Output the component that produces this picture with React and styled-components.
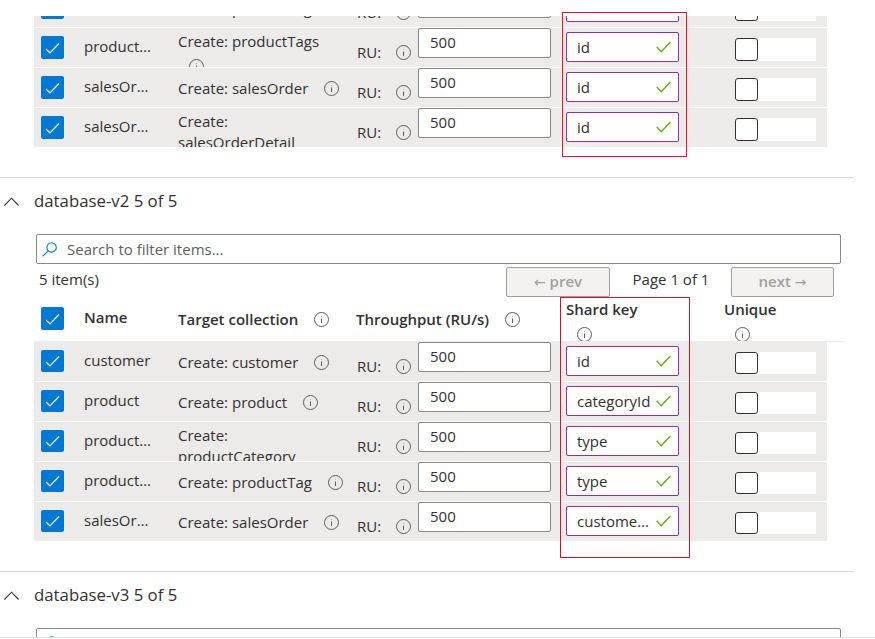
import React from "react";
import styled, { createGlobalStyle } from "styled-components";

const Global = createGlobalStyle`
  html, body { margin: 0; padding: 0; background: #fff; }
  body { font-family: "Open Sans", "Noto Sans", "Liberation Sans", sans-serif; font-size: 15px; color: #323130; }
`;

const Page = styled.div`
  position: relative;
  height: 638px;
  overflow: hidden;
  padding-top: 16px;
  box-sizing: border-box;
  border-bottom: 1px solid #e1dfdd;
`;
const Annotation = styled.div`
  position: absolute;
  left: ${(p) => p.$left}px;
  top: ${(p) => p.$top}px;
  width: ${(p) => p.$width}px;
  height: ${(p) => p.$height}px;
  box-sizing: border-box;
  border: 1px solid ${(p) => p.$color};
  pointer-events: none;
`;
const ScrolledRows = styled.div`
  height: 131px;
  overflow: hidden;
`;
const ScrollInner = styled.div`
  margin-top: -28px;
`;
const Section = styled.section`
  padding-bottom: 30px;
  border-bottom: 1px solid #d8d8d8;
  width: 854px;
`;
const Heading = styled.div`
  display: flex;
  align-items: center;
  height: 46px;
  margin-bottom: 10px;
  gap: 15px;
  padding-left: 4px;
  font-size: 16.8px;
`;
const HeadingText = styled.span`
  padding-bottom: 2px;
`;
const SearchBox = styled.div`
  display: flex;
  align-items: center;
  gap: 10px;
  box-sizing: border-box;
  margin-left: 36px;
  width: 805px;
  height: 30px;
  padding-left: 5px;
  border: 1px solid #8a8886;
  border-radius: 2px;
`;
const SearchInput = styled.input`
  flex: 1;
  border: 0;
  outline: 0;
  padding: 0;
  background: transparent;
  font: inherit;
  color: #323130;
  &::placeholder { color: #605e5c; opacity: 1; }
`;
const PagerRow = styled.div`
  display: flex;
  justify-content: space-between;
  width: 795px;
  margin: 3px 0 0 39px;
  height: 30px;
  line-height: 24px;
`;
const Pager = styled.div`
  display: flex;
  align-items: flex-start;
`;
const PageLabel = styled.span`
  box-sizing: border-box;
  width: 121px;
  padding-left: 1px;
  text-align: center;
`;
const PagerButton = styled.button`
  box-sizing: border-box;
  width: ${(p) => p.$width}px;
  height: 30px;
  padding: 0 0 2px;
  border: 1px solid #a19f9d;
  border-radius: 2px;
  background: #f3f2f1;
  color: #a19f9d;
  font: inherit;
  font-weight: 600;
`;
const Arrow = styled.span`
  font-family: "DejaVu Sans", sans-serif;
  font-weight: 400;
  font-size: 14px;
`;
const Table = styled.div`
  margin-left: 34px;
  width: 810px;
`;
const columns = "50px 94px 179px 209px 158px 103px";
const HeadRow = styled.div`
  display: grid;
  grid-template-columns: ${columns};
  height: 44px;
  overflow: hidden;
  border-bottom: 1px solid #edebe9;
  box-sizing: content-box;
  font-weight: 600;
`;
const HeadCell = styled.div`
  display: flex;
  flex-wrap: ${(p) => (p.$stack ? "wrap" : "nowrap")};
  align-content: flex-start;
  align-items: flex-start;
  margin-left: ${(p) => p.$shift || 0}px;
  padding-top: ${(p) => p.$top}px;
  line-height: 21px;
  white-space: nowrap;
`;
const HeadLabel = styled.span`
  flex: ${(p) => (p.$stack ? "0 0 100%" : "0 0 auto")};
  margin-right: ${(p) => (p.$stack ? 0 : 16)}px;
`;
const HeadInfo = styled.span`
  display: flex;
  margin-top: 3px;
`;
const StackedInfo = styled.span`
  display: flex;
  margin: 7px 0 0 11px;
`;
const Row = styled.div`
  display: grid;
  grid-template-columns: ${columns};
  width: 793px;
  height: 39px;
  margin-bottom: 1px;
  overflow: hidden;
  background: #edebe9;
  &:last-child { margin-bottom: 0; }
`;
const CheckCell = styled.div`
  padding: ${(p) => p.$top}px 0 0 7px;
`;
const CheckBox = styled.span`
  display: flex;
  align-items: center;
  justify-content: center;
  width: 23px;
  height: ${(p) => (p.$tall ? 23 : 22)}px;
  border-radius: 2px;
  background: #0078d4;
`;
const NameCell = styled.div`
  width: 70px;
  padding-top: 8px;
  line-height: 21px;
  white-space: nowrap;
  overflow: hidden;
  text-overflow: ellipsis;
`;
const TargetCell = styled.div`
  display: flex;
  flex-wrap: wrap;
  align-items: center;
  align-content: flex-start;
  width: 170px;
  padding-top: ${(p) => (p.$wrapped ? 3 : 10)}px;
  line-height: 21px;
`;
const TargetText = styled.span`
  padding-right: 5px;
`;
const TargetInfo = styled.span`
  display: flex;
  margin: ${(p) => (p.$wrapped ? "7px" : "0")} 0 0 11px;
`;
const ThroughputCell = styled.div`
  display: flex;
  align-items: flex-start;
`;
const RuLabel = styled.span`
  width: 39px;
  padding-top: 14px;
  line-height: 21px;
`;
const RuInfo = styled.span`
  display: flex;
  width: 22px;
  padding-top: 17px;
`;
const RuInput = styled.input`
  box-sizing: border-box;
  width: 133px;
  height: 30px;
  padding: 0 11px 2px;
  border: 1px solid #8a8886;
  border-radius: 2px;
  background: #fff;
  font: inherit;
  color: #323130;
  outline: 0;
`;
const ShardBox = styled.div`
  display: flex;
  align-items: center;
  justify-content: space-between;
  box-sizing: border-box;
  width: 113px;
  height: 30px;
  margin-top: 4px;
  padding: 0 7px 0 10px;
  border: 1px solid #8e2db0;
  border-radius: 2px;
  background: #fff;
`;
const ShardText = styled.span`
  width: 76px;
  overflow: hidden;
  white-space: nowrap;
  text-overflow: ellipsis;
`;
const UniqueCell = styled.div`
  padding: 10px 0 0 11px;
`;
const UniqueStrip = styled.div`
  width: 81px;
  height: ${(p) => (p.$tall ? 23 : 22)}px;
  background: #fff;
`;
const UniqueBox = styled.span`
  display: block;
  box-sizing: border-box;
  width: 23px;
  height: 100%;
  border: 1px solid #323130;
  border-radius: 3px;
  background: #fff;
`;

const Info = () => (
  <svg width="15" height="15" viewBox="0 0 15 15" fill="none" stroke="#605e5c">
    <circle cx="7.5" cy="7.5" r="7" />
    <path d="M7.5 6.5v4.5" />
    <circle cx="7.5" cy="4.4" r=".5" fill="#a19f9d" stroke="none" />
  </svg>
);
const Tick = () => (
  <svg width="23" height="22" viewBox="0 0 23 22" fill="none" stroke="#fff" strokeWidth="1.2">
    <path d="M5 12l4 4 9-9.5" />
  </svg>
);
const Valid = () => (
  <svg width="15" height="12" viewBox="0 0 15 12" fill="none" stroke="#5fae0c" strokeWidth="1.3" style={{ flex: "none" }}>
    <path d="M.7 6l4.6 4.8L14.4 1" />
  </svg>
);
const Chevron = () => (
  <svg width="15" height="9" viewBox="0 0 15 9" fill="none" stroke="#323130" strokeWidth="1.1">
    <path d="M.4 8.5L7.5 1.2l7.1 7.3" />
  </svg>
);
const Magnifier = () => (
  <svg width="15" height="15" viewBox="0 0 15 15" fill="none" stroke="#0078d4" strokeWidth="1.1">
    <circle cx="9.6" cy="5.4" r="4.7" />
    <path d="M6.2 8.8L.6 14.4" />
  </svg>
);

const sections = {
  top: [
    ["productTag", "productTag", "id"],
    ["productTags", "productTags", "id", "iconWrap"],
    ["salesOrder", "salesOrder", "id"],
    ["salesOrderDetail", "salesOrderDetail", "id", "wrap"],
  ],
  v2: [
    ["customer", "customer", "id"],
    ["product", "product", "categoryId"],
    ["productCategory", "productCategory", "type", "wrap"],
    ["productTag", "productTag", "type"],
    ["salesOrder", "salesOrder", "customerId"],
  ],
};

function DataRow({ name, target, shard, mode, tall }) {
  const wrapped = mode === "wrap" || mode === "iconWrap";
  return (
    <Row>
      <CheckCell $top={8}>
        <CheckBox $tall={tall}><Tick /></CheckBox>
      </CheckCell>
      <NameCell>{name}</NameCell>
      <TargetCell $wrapped={wrapped}>
        <TargetText>Create: {target}</TargetText>
        <TargetInfo $wrapped={mode === "iconWrap"}><Info /></TargetInfo>
      </TargetCell>
      <ThroughputCell>
        <RuLabel>RU:</RuLabel>
        <RuInfo><Info /></RuInfo>
        <RuInput defaultValue="500" />
      </ThroughputCell>
      <div>
        <ShardBox>
          <ShardText>{shard}</ShardText>
          <Valid />
        </ShardBox>
      </div>
      <UniqueCell>
        <UniqueStrip $tall={tall}><UniqueBox /></UniqueStrip>
      </UniqueCell>
    </Row>
  );
}

function SectionTitle({ children }) {
  return (
    <Heading>
      <Chevron />
      <HeadingText>{children}</HeadingText>
    </Heading>
  );
}

function Search() {
  return (
    <SearchBox>
      <Magnifier />
      <SearchInput placeholder="Search to filter items..." />
    </SearchBox>
  );
}

export default function App() {
  return (
    <Page>
      <Global />
      <Section>
        <ScrolledRows>
          <Table>
            <ScrollInner>
              {sections.top.map(([n, t, s, m]) => (
                <DataRow key={n + t} name={n} target={t} shard={s} mode={m} tall />
              ))}
            </ScrollInner>
          </Table>
        </ScrolledRows>
      </Section>
      <Section>
        <SectionTitle>database-v2 5 of 5</SectionTitle>
        <Search />
        <PagerRow>
          <span>5 item(s)</span>
          <Pager>
            <PagerButton $width={104} disabled><Arrow>←</Arrow> prev</PagerButton>
            <PageLabel>Page 1 of 1</PageLabel>
            <PagerButton $width={103} disabled>next <Arrow>→</Arrow></PagerButton>
          </Pager>
        </PagerRow>
        <Table>
          <HeadRow>
            <CheckCell $top={10}>
              <CheckBox $tall><Tick /></CheckBox>
            </CheckCell>
            <HeadCell $top={10}>Name</HeadCell>
            <HeadCell $top={12}>
              <HeadLabel>Target collection</HeadLabel>
              <HeadInfo><Info /></HeadInfo>
            </HeadCell>
            <HeadCell $top={12} $shift={-1}>
              <HeadLabel>Throughput (RU/s)</HeadLabel>
              <HeadInfo><Info /></HeadInfo>
            </HeadCell>
            <HeadCell $top={2} $stack>
              <HeadLabel $stack>Shard key</HeadLabel>
              <StackedInfo><Info /></StackedInfo>
            </HeadCell>
            <HeadCell $top={2} $stack>
              <HeadLabel $stack>Unique</HeadLabel>
              <StackedInfo><Info /></StackedInfo>
            </HeadCell>
          </HeadRow>
          {sections.v2.map(([n, t, s, m]) => (
            <DataRow key={n} name={n} target={t} shard={s} mode={m} />
          ))}
        </Table>
      </Section>
      <SectionTitle>database-v3 5 of 5</SectionTitle>
      <Search />
      <Annotation $left={562} $top={12} $width={125} $height={145} $color="#f01428" />
      <Annotation $left={560} $top={297} $width={130} $height={261} $color="#d0142c" />
    </Page>
  );
}
